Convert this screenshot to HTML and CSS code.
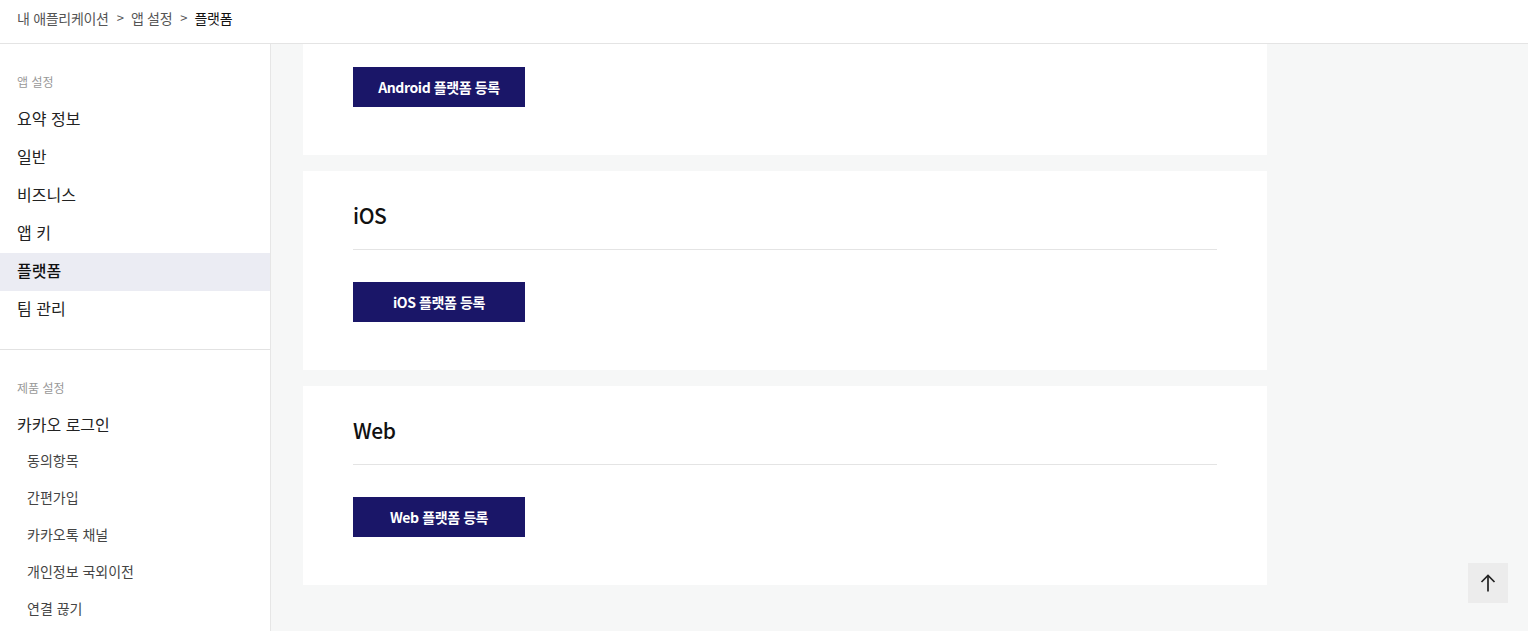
FILE: index.html
```html
<!DOCTYPE html>
<html lang="ko">
<head>
<meta charset="utf-8">
<title>플랫폼</title>
<link rel="stylesheet" href="styles.css">
</head>
<body>
<header class="topbar">
  <nav class="crumbs">
    <span class="crumb">내 애플리케이션</span>
    <span class="sep">&gt;</span>
    <span class="crumb">앱 설정</span>
    <span class="sep">&gt;</span>
    <span class="crumb current">플랫폼</span>
  </nav>
</header>
<div class="layout">
  <aside class="sidebar">
    <div class="side-group">
      <div class="side-label">앱 설정</div>
      <ul class="side-list">
        <li class="side-item">요약 정보</li>
        <li class="side-item">일반</li>
        <li class="side-item">비즈니스</li>
        <li class="side-item">앱 키</li>
        <li class="side-item active">플랫폼</li>
        <li class="side-item">팀 관리</li>
      </ul>
    </div>
    <div class="side-group">
      <div class="side-label">제품 설정</div>
      <ul class="side-list">
        <li class="side-item">카카오 로그인</li>
      </ul>
      <ul class="sub-list">
        <li class="sub-item">동의항목</li>
        <li class="sub-item">간편가입</li>
        <li class="sub-item">카카오톡 채널</li>
        <li class="sub-item">개인정보 국외이전</li>
        <li class="sub-item">연결 끊기</li>
      </ul>
    </div>
  </aside>
  <main class="main">
    <div class="cards">
      <section class="card card-scrolled">
        <button class="btn">Android 플랫폼 등록</button>
      </section>
      <section class="card">
        <h2 class="card-title">iOS</h2>
        <button class="btn">iOS 플랫폼 등록</button>
      </section>
      <section class="card">
        <h2 class="card-title">Web</h2>
        <button class="btn">Web 플랫폼 등록</button>
      </section>
    </div>
    <button class="to-top" aria-label="맨 위로">
      <svg width="20" height="20" viewBox="0 0 20 20" fill="none" stroke="#222" stroke-width="1.7">
        <path d="M10 2.5V18.5"/>
        <path d="M3.5 9L10 2.5L16.5 9"/>
      </svg>
    </button>
  </main>
</div>
</body>
</html>
```
FILE: styles.css
```css
* { box-sizing: border-box; }
html, body { margin: 0; padding: 0; height: 100%; }
body {
  font-family: "Noto Sans CJK KR", "Noto Sans", sans-serif;
  color: #222;
  background: #f6f7f7;
  overflow: hidden;
}
ul { list-style: none; margin: 0; padding: 0; }

.topbar {
  height: 44px;
  background: #fff;
  border-bottom: 1px solid #e4e4e4;
  display: flex;
  align-items: center;
  padding: 0 17px 8px;
}
.crumbs { display: flex; align-items: center; font-size: 14px; color: #555; }
.crumb { letter-spacing: -0.3px; }
.crumb.current { color: #111; }
.sep { margin: 0 7px 0 8px; color: #555; font-size: 13px; }

.layout { display: flex; height: calc(100% - 44px); }

.sidebar {
  width: 271px;
  flex: none;
  background: #fff;
  border-right: 1px solid #e6e6e6;
}
.side-group { padding: 28px 0 20px; border-bottom: 1px solid #e2e2e2; }
.side-group:last-child { border-bottom: none; }
.side-label {
  font-size: 12px;
  line-height: 20px;
  color: #999;
  padding-left: 17px;
  margin-bottom: 9px;
}
.side-item {
  height: 38px;
  line-height: 34px;
  font-size: 16px;
  padding-left: 17px;
  color: #222;
}
.side-item.active { background: #ebecf3; font-weight: 500; color: #111; }
.sub-list { margin-top: -2px; }
.sub-item {
  height: 37px;
  line-height: 34px;
  font-size: 14px;
  padding-left: 27px;
  color: #444;
}

.main {
  flex: 1;
  position: relative;
  overflow: hidden;
  padding: 0 32px;
}
.cards {
  width: 964px;
  display: flex;
  flex-direction: column;
  gap: 16px;
}
.card {
  background: #fff;
  padding: 27px 50px 48px;
}
.card-scrolled { padding-top: 23px; }
.card-title {
  margin: 0;
  font-size: 21px;
  font-weight: 500;
  letter-spacing: -0.4px;
  line-height: 34px;
  padding-bottom: 17px;
  border-bottom: 1px solid #e4e4e4;
  color: #111;
}
.btn {
  margin-top: 32px;
  width: 172px;
  height: 40px;
  border: none;
  background: #1a1668;
  color: #fff;
  font-family: inherit;
  font-size: 14px;
  font-weight: 700;
  letter-spacing: -0.4px;
  display: block;
  padding: 0;
}
.card-scrolled .btn { margin-top: 0; }
.to-top {
  position: absolute;
  right: 20px;
  bottom: 28px;
  width: 40px;
  height: 40px;
  border: none;
  background: #ececec;
  display: flex;
  align-items: center;
  justify-content: center;
  padding: 0;
}
```
